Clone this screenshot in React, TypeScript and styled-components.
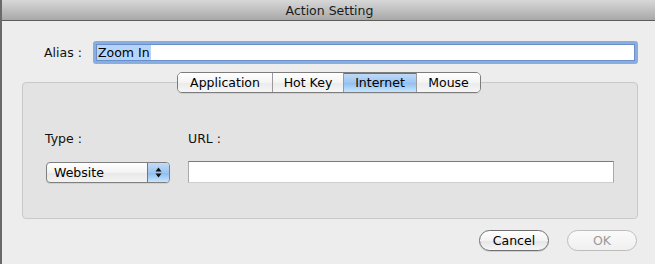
import styled, { createGlobalStyle } from 'styled-components';

const GlobalStyle = createGlobalStyle`
	html, body {
		margin: 0;
		padding: 0;
		background: #ededed;
	}
	body {
		font-family: 'DejaVu Sans', 'Liberation Sans', sans-serif;
		font-size: 12.5px;
		color: #000;
	}
`;

const Window = styled.div`
	width: 655px;
	height: 264px;
	box-sizing: border-box;
	border-left: 2px solid #6a6a6a;
	background: #ededed;
	display: flex;
	flex-direction: column;
	overflow: hidden;
`;

const TitleBar = styled.div`
	height: 21px;
	box-sizing: border-box;
	border-bottom: 1px solid #5c5c5c;
	background: linear-gradient(#d8d8d8, #a8a8a8);
	display: flex;
	align-items: center;
	justify-content: center;
	font-size: 12.5px;
	color: #1a1a1a;
	padding-left: 2px;
	padding-top: 1px;
`;

const AliasRow = styled.div`
	display: flex;
	align-items: center;
	margin-top: 20px;
	padding-left: 42px;
	padding-right: 17px;
`;

const Label = styled.span`
	display: block;
	color: #111;
	line-height: 16px;
	white-space: nowrap;
`;

const AliasLabel = styled(Label)`
	width: 49px;
`;

const FocusField = styled.div`
	flex: 1;
	height: 23px;
	box-sizing: border-box;
	border: 3px solid #86aee3;
	border-radius: 3px;
	background: #fff;
	box-shadow: inset 0 0 0 1px #6c8fc7;
	display: flex;
	align-items: center;
	padding-left: 1px;
`;

const Selected = styled.span`
	background: #b5d4fd;
	line-height: 15px;
	padding: 0 1px;
`;

const Section = styled.div`
	margin: 8px 17px 0 20px;
	display: flex;
	flex-direction: column;
`;

const TabBar = styled.div`
	display: flex;
	justify-content: center;
	position: relative;
	z-index: 1;
	margin-bottom: -11px;
	padding-right: 2px;
`;

const Tabs = styled.div`
	display: flex;
	height: 21px;
	box-sizing: border-box;
	border: 1px solid #7c7c7c;
	border-radius: 5px;
	overflow: hidden;
	box-shadow: 0 1px 0 rgba(0, 0, 0, 0.08);
`;

const Tab = styled.div<{ $active?: boolean; $w: number }>`
	width: ${p => p.$w}px;
	display: flex;
	align-items: center;
	justify-content: center;
	box-sizing: border-box;
	border-left: 1px solid #9a9a9a;
	&:first-child {
		border-left: none;
	}
	background: ${p =>
		p.$active
			? 'linear-gradient(#c3dbf6 0%, #9ec6f0 50%, #8dbdf0 52%, #c7e6fe 100%)'
			: 'linear-gradient(#ffffff 0%, #f4f4f4 50%, #ebebeb 52%, #f6f6f6 100%)'};
	box-shadow: ${p => (p.$active ? 'inset 0 1px 0 #5a70a8' : 'none')};
	line-height: 19px;
`;

const GroupBox = styled.div`
	height: 137px;
	box-sizing: border-box;
	border: 1px solid #c9c9c9;
	border-radius: 4px;
	background: #e3e3e3;
	padding: 48px 23px 0 22px;
	display: grid;
	grid-template-columns: 143px 1fr;
	grid-template-rows: 16px 23px;
	row-gap: 13px;
	align-items: center;
`;

const SelectBox = styled.div`
	width: 124px;
	height: 21px;
	box-sizing: border-box;
	border: 1px solid #7f7f7f;
	border-radius: 4px;
	overflow: hidden;
	display: flex;
	background: linear-gradient(#ffffff 0%, #f3f3f3 50%, #e8e8e8 52%, #f3f3f3 100%);
	box-shadow: 0 1px 0 rgba(0, 0, 0, 0.08);
	margin-left: 1px;
	margin-top: 2px;
`;

const SelectText = styled.span`
	flex: 1;
	padding-left: 7px;
	line-height: 19px;
`;

const Stepper = styled.div`
	width: 21px;
	display: flex;
	align-items: center;
	justify-content: center;
	border-left: 1px solid #5d77b6;
	background: linear-gradient(#c2dbf7 0%, #9cc5f0 50%, #8abcf0 52%, #c6e5fe 100%);
`;

const TextField = styled.div`
	height: 22px;
	box-sizing: border-box;
	background: #fff;
	border: 1px solid #a9a9a9;
	border-top-color: #7b7b7b;
	border-bottom-color: #cfcfcf;
`;

const Footer = styled.div`
	display: flex;
	justify-content: flex-end;
	gap: 18px;
	margin-top: 11px;
	padding-right: 18px;
`;

const Button = styled.div<{ $disabled?: boolean }>`
	width: 70px;
	height: 21px;
	box-sizing: border-box;
	border-radius: 11px;
	border: 1px solid ${p => (p.$disabled ? '#bdbdbd' : '#6f6f6f')};
	background: ${p =>
		p.$disabled
			? 'linear-gradient(#fafafa, #f0f0f0)'
			: 'linear-gradient(#ffffff 0%, #f3f3f3 50%, #e6e6e6 52%, #f5f5f5 100%)'};
	color: ${p => (p.$disabled ? '#9a9a9a' : '#000')};
	display: flex;
	align-items: center;
	justify-content: center;
	line-height: 19px;
	box-shadow: ${p => (p.$disabled ? 'none' : '0 1px 0 rgba(0, 0, 0, 0.12)')};
`;

function Arrows() {
	return (
		<svg width="7" height="11" viewBox="0 0 7 11">
			<path d="M3.5 0.5 L6.5 4.5 L0.5 4.5 Z" fill="#111" />
			<path d="M3.5 10.5 L6.5 6.5 L0.5 6.5 Z" fill="#111" />
		</svg>
	);
}

const tabs = [
	{ name: 'Application', w: 94 },
	{ name: 'Hot Key', w: 71 },
	{ name: 'Internet', w: 73 },
	{ name: 'Mouse', w: 64 }
];

function App() {
	return (
		<>
			<GlobalStyle />
			<Window>
				<TitleBar>Action Setting</TitleBar>
				<AliasRow>
					<AliasLabel>Alias :</AliasLabel>
					<FocusField>
						<Selected>Zoom In</Selected>
					</FocusField>
				</AliasRow>
				<Section>
					<TabBar>
						<Tabs>
							{tabs.map(tab => (
								<Tab key={tab.name} $w={tab.w} $active={tab.name === 'Internet'}>
									{tab.name}
								</Tab>
							))}
						</Tabs>
					</TabBar>
					<GroupBox>
						<Label>Type :</Label>
						<Label>URL :</Label>
						<SelectBox>
							<SelectText>Website</SelectText>
							<Stepper>
								<Arrows />
							</Stepper>
						</SelectBox>
						<TextField />
					</GroupBox>
				</Section>
				<Footer>
					<Button>Cancel</Button>
					<Button $disabled>OK</Button>
				</Footer>
			</Window>
		</>
	);
}

export default App;
